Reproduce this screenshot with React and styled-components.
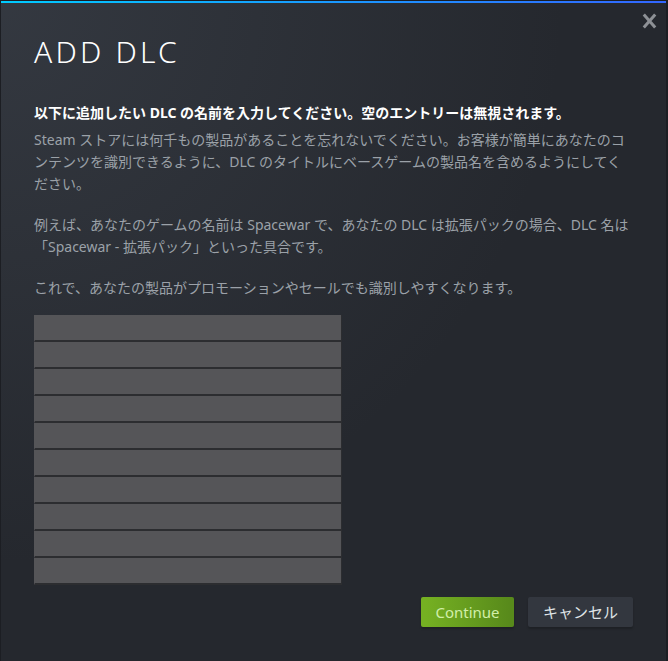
import React from "react";
import styled, { createGlobalStyle } from "styled-components";

const Global = createGlobalStyle`
  html, body { margin: 0; padding: 0; background: #1c1e23; }
  body { padding: 1px 0 0 1px; font-family: "Noto Sans", "Noto Sans CJK JP", sans-serif; }
  * { box-sizing: border-box; }
`;

const Dialog = styled.div`
  position: relative;
  width: 665px;
  min-height: 660px;
  padding: 33px 33px 30px 33px;
  background:
    linear-gradient(to right, #00ccff, #3366ff) top left / 100% 2px no-repeat,
    radial-gradient(circle at top left, rgba(74, 81, 92, 0.4) 0%, rgba(75, 81, 92, 0) 60%),
    #25282e;
  display: flex;
  flex-direction: column;
`;

const Close = styled.button`
  position: absolute;
  top: 11px;
  right: 8px;
  width: 18px;
  height: 18px;
  padding: 0;
  border: 0;
  background: none;
  cursor: pointer;
  display: flex;
  align-items: center;
  justify-content: center;
`;

const Title = styled.h1`
  margin: 0;
  font-family: "Noto Sans", sans-serif;
  font-weight: 300;
  font-size: 30px;
  line-height: 36px;
  letter-spacing: 3.2px;
  color: #ffffff;
`;

const Lead = styled.p`
  margin: 32px 0 0;
  width: 596px;
  font-size: 14px;
  line-height: 22px;
  font-weight: 700;
  color: #ffffff;
`;

const Body = styled.p`
  margin: ${(p) => (p.$first ? "5px" : "19px")} 0 0;
  width: 596px;
  font-size: 14px;
  line-height: 22px;
  color: #9ba1a8;
`;

const InputList = styled.div`
  margin-top: 16px;
  display: flex;
  flex-direction: column;
`;

const Field = styled.input`
  display: block;
  width: 308px;
  height: 27px;
  margin: 0;
  padding: 0 6px;
  background: #555558;
  border: 0;
  border-left: 1px solid transparent;
  border-right: 1px solid #2c2d30;
  border-bottom: 2px solid #2c2d30;
  color: #ffffff;
  font-family: inherit;
  font-size: 13px;
  outline: none;
`;

const Actions = styled.div`
  margin-top: 12px;
  display: flex;
  justify-content: flex-end;
  gap: 14px;
`;

const Button = styled.button`
  height: 30px;
  padding: 0 14px;
  min-width: ${(p) => (p.$primary ? "93px" : "105px")};
  border: 0;
  border-radius: 2px;
  font-family: "Noto Sans", "Noto Sans CJK JP", sans-serif;
  font-size: 15px;
  line-height: 30px;
  cursor: pointer;
  color: ${(p) => (p.$primary ? "#d2efa9" : "#dfe3e6")};
  background: ${(p) =>
    p.$primary
      ? "linear-gradient(to right, #75b022 5%, #588a1b 95%)"
      : "#33373f"};
  box-shadow: 0 2px 2px rgba(0, 0, 0, 0.2);
`;

export default function App() {
  const rows = Array.from({ length: 10 });
  return (
    <>
      <Global />
      <Dialog>
        <Close aria-label="close">
          <svg width="15" height="16" viewBox="0 0 15 16">
            <path d="M1.8 1.5 L13.2 14.5 M13.2 1.5 L1.8 14.5" stroke="#8d9095" strokeWidth="3" strokeLinecap="butt" />
          </svg>
        </Close>
        <Title>ADD DLC</Title>
        <Lead>以下に追加したい DLC の名前を入力してください。空のエントリーは無視されます。</Lead>
        <Body $first>
          Steam ストアには何千もの製品があることを忘れないでください。お客様が簡単にあなたのコンテンツを識別できるように、DLC のタイトルにベースゲームの製品名を含めるようにしてください。
        </Body>
        <Body>
          例えば、あなたのゲームの名前は Spacewar で、あなたの DLC は拡張パックの場合、DLC 名は「Spacewar - 拡張パック」といった具合です。
        </Body>
        <Body>これで、あなたの製品がプロモーションやセールでも識別しやすくなります。</Body>
        <InputList>
          {rows.map((_, i) => (
            <Field key={i} type="text" />
          ))}
        </InputList>
        <Actions>
          <Button $primary>Continue</Button>
          <Button>キャンセル</Button>
        </Actions>
      </Dialog>
    </>
  );
}
